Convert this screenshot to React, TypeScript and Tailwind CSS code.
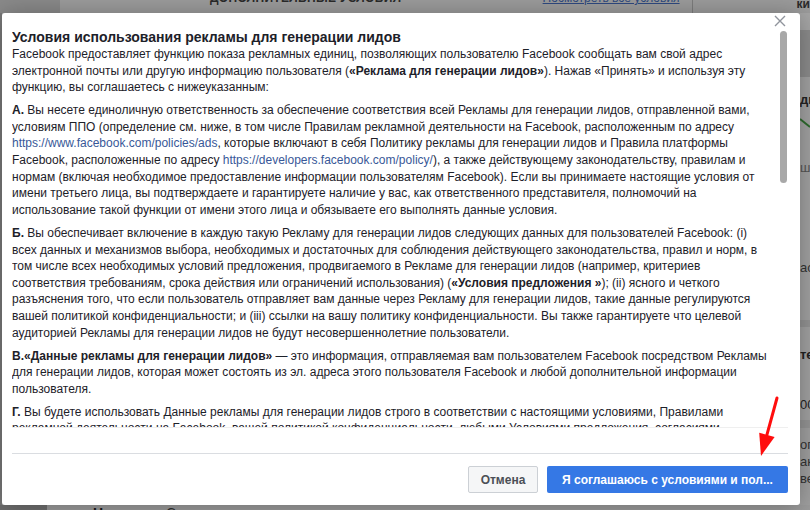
const link = 'text-[#385898]';

function Backdrop({ children }: { children: React.ReactNode }) {
  return (
    <div className="w-[810px] h-[510px] overflow-hidden flex flex-col bg-[#9c9c9c] font-['Liberation_Sans',Arial,sans-serif]">
      {/* top strip of the dimmed page */}
      <div className="h-[13px] shrink-0 flex items-end overflow-hidden whitespace-nowrap text-[12px] leading-[14px] text-[#2a2a2a]">
        <div className="w-[60px] h-full shrink-0 bg-[#8a8a8a]" />
        <span className="ml-[150px] mb-[8px] font-bold tracking-wide">ДОПОЛНИТЕЛЬНЫЕ УСЛОВИЯ</span>
        <span className="ml-auto mb-[8px] text-[#2f4a80] underline">Посмотреть все условия</span>
        <div className="ml-[12px] w-px h-full shrink-0 bg-[#7d7d7d]" />
        <span className="ml-[104px] mb-[2px] font-bold">ки</span>
      </div>

      <div className="flex flex-1 min-h-0">
        <div className="w-[2px] shrink-0 bg-[#7a7a7a]" />
        {children}
        {/* right strip of the dimmed page */}
        <div className="w-[10px] shrink-0 flex flex-col overflow-hidden text-[13px] leading-[16px] text-[#222] whitespace-nowrap">
          <div className="h-[17px] bg-[#a6a6a6]" />
          <div className="h-[47px] bg-[#8c8c8c]" />
          <div className="h-[243px] bg-[#a2a2a2] flex flex-col">
            <span className="mt-[15px] font-bold">дн</span>
            <svg width="10" height="12" className="mt-[10px]">
              <path d="M0 1 L10 9" stroke="#2e6b2e" strokeWidth="2" />
            </svg>
            <span className="mt-[30px] text-[#555]">ш</span>
            <span className="mt-[84px] text-[#333]">ас</span>
          </div>
          <div className="h-[7px] bg-[#949494]" />
          <div className="h-[93px] bg-[#a2a2a2] flex flex-col">
            <span className="mt-[20px] font-bold">те</span>
            <span className="mt-[34px]">00</span>
          </div>
          <div className="h-[8px] bg-[#959595]" />
          <div className="flex-1 bg-[#a0a0a0] flex flex-col text-[#333] leading-[17px]">
            <span className="mt-[8px]">ог</span>
            <span>ак</span>
            <span>ве</span>
          </div>
        </div>
      </div>

      {/* bottom strip */}
      <div className="h-[5px] shrink-0 flex overflow-hidden text-[14px] leading-[16px] text-[#1a1a1a]">
        <div className="w-[47px] h-full bg-[#6f6f6f]" />
        <span className="ml-[46px] font-bold">Новая</span>
        <span className="ml-[30px] text-[#333]">Сохраненная ▼</span>
      </div>
    </div>
  );
}

function CloseIcon() {
  return (
    <svg width="12" height="12" viewBox="0 0 12 12" className="absolute right-[14px] top-[2px]">
      <path d="M1 1 L11 11 M11 1 L1 11" stroke="#90949c" strokeWidth="1.4" />
    </svg>
  );
}

function Terms() {
  return (
    <div className="text-[12px] leading-[16.6px] text-[#1d2129] [&>p]:mb-[6.5px]">
      <h2 className="text-[14px] leading-[18px] font-bold text-[#1d2129]">
        Условия использования рекламы для генерации лидов
      </h2>
      <p>
        Facebook предоставляет функцию показа рекламных единиц, позволяющих пользователю Facebook сообщать вам свой адрес
        электронной почты или другую информацию пользователя (<b>«Реклама для генерации лидов»</b>). Нажав «Принять» и
        используя эту функцию, вы соглашаетесь с нижеуказанным:
      </p>
      <p>
        <b>А.</b> Вы несете единоличную ответственность за обеспечение соответствия всей Рекламы для генерации лидов,
        отправленной вами, условиям ППО (определение см. ниже, в том числе Правилам рекламной деятельности на Facebook,
        расположенным по адресу <span className={link}>https://www.facebook.com/policies/ads</span>, которые включают в
        себя Политику рекламы для генерации лидов и Правила платформы Facebook, расположенные по адресу{' '}
        <span className={link}>https://developers.facebook.com/policy/</span>), а также действующему законодательству,
        правилам и нормам (включая необходимое предоставление информации пользователям Facebook). Если вы принимаете
        настоящие условия от имени третьего лица, вы подтверждаете и гарантируете наличие у вас, как ответственного
        представителя, полномочий на использование такой функции от имени этого лица и обязываете его выполнять данные
        условия.
      </p>
      <p>
        <b>Б.</b> Вы обеспечивает включение в каждую такую Рекламу для генерации лидов следующих данных для пользователей
        Facebook: (i) всех данных и механизмов выбора, необходимых и достаточных для соблюдения действующего
        законодательства, правил и норм, в том числе всех необходимых условий предложения, продвигаемого в Рекламе для
        генерации лидов (например, критериев соответствия требованиям, срока действия или ограничений использования) (
        <b>«Условия предложения »</b>); (ii) ясного и четкого разъяснения того, что если пользователь отправляет вам
        данные через Рекламу для генерации лидов, такие данные регулируются вашей политикой конфиденциальности; и (iii)
        ссылки на вашу политику конфиденциальности. Вы также гарантируете что целевой аудиторией Рекламы для генерации
        лидов не будут несовершеннолетние пользователи.
      </p>
      <p>
        <b>В.«Данные рекламы для генерации лидов»</b> — это информация, отправляемая вам пользователем Facebook
        посредством Рекламы для генерации лидов, которая может состоять из эл. адреса этого пользователя Facebook и любой
        дополнительной информации пользователя.
      </p>
      <p>
        <b>Г.</b> Вы будете использовать Данные рекламы для генерации лидов строго в соответствии с настоящими условиями,
        Правилами рекламной деятельности на Facebook, вашей политикой конфиденциальности, любыми Условиями предложения,
        согласиями пользователей и действующим законодательством, правилами и нормами.
      </p>
      <p>
        <b>Д.</b> Вы не будете продавать или передавать Данные рекламы для генерации лидов третьим лицам, за исключением
        поставщиков услуг, действующих от вашего имени.
      </p>
    </div>
  );
}

export default function App() {
  return (
    <Backdrop>
      <div className="relative z-10 w-[798px] shrink-0 flex flex-col bg-white rounded-[3px] shadow-[0_2px_26px_rgba(0,0,0,0.3)]">
        <CloseIcon />

        {/* scrolling body */}
        <div className="mt-[15px] ml-[10px] mr-[12px] pr-[1px] h-[400px] flex border-b border-[#efefef]">
          <div className="flex-1 min-w-0 pr-[6px] overflow-hidden">
            <Terms />
          </div>
          <div className="ml-[4px] w-[7px] shrink-0 pt-[3px]">
            <div className="h-[152px] rounded-full bg-[#a8a8a8]" />
          </div>
        </div>

        {/* footer */}
        <div className="mt-[25px] ml-[10px] mr-[12px] border-t border-[#dadde1] pt-[12px] pb-[12px] flex justify-end gap-[9px]">
          <button className="h-[27px] w-[70px] rounded-[2px] border border-[#ccd0d5] bg-[#f5f6f7] text-[12px] font-bold text-[#4b4f56]">
            Отмена
          </button>
          <button className="h-[27px] w-[241px] rounded-[2px] bg-[#3578e5] text-[12px] font-bold text-white whitespace-nowrap">
            Я соглашаюсь с условиями и пол...
          </button>
        </div>

        {/* red annotation arrow */}
        <svg width="40" height="70" viewBox="0 0 40 70" className="absolute left-[743px] top-[382px]">
          <path d="M32 3 L21.9 39.8" stroke="#ff0d0d" strokeWidth="3" strokeLinecap="round" />
          <path d="M16 61 L29.6 41.9 L14.2 37.7 Z" fill="#ff0d0d" />
        </svg>
      </div>
    </Backdrop>
  );
}
